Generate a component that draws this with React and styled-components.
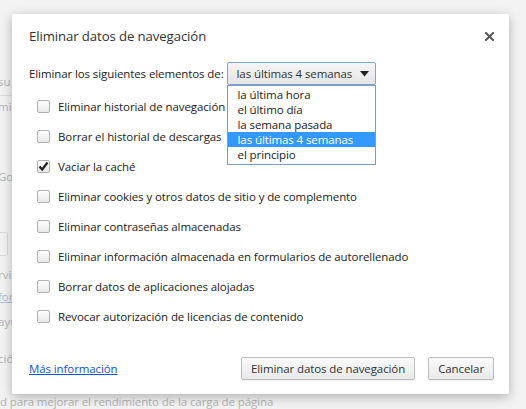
import React from "react"
import styled, { createGlobalStyle } from "styled-components"

const GlobalStyle = createGlobalStyle`
  html, body { margin: 0; padding: 0; }
  body {
    width: 526px;
    height: 409px;
    overflow: hidden;
    font-family: "Open Sans", "Liberation Sans", sans-serif;
  }
`

const ranges = [
  "la última hora",
  "el último día",
  "la semana pasada",
  "las últimas 4 semanas",
  "el principio",
]

const options = [
  { label: "Eliminar historial de navegación", checked: false },
  { label: "Borrar el historial de descargas", checked: false },
  { label: "Vaciar la caché", checked: true },
  { label: "Eliminar cookies y otros datos de sitio y de complemento", checked: false },
  { label: "Eliminar contraseñas almacenadas", checked: false },
  { label: "Eliminar información almacenada en formularios de autorellenado", checked: false },
  { label: "Borrar datos de aplicaciones alojadas", checked: false },
  { label: "Revocar autorización de licencias de contenido", checked: false },
]

const fragments = [
  { text: "su", top: 74 },
  { text: "mi", top: 99 },
  { text: "Go", top: 169 },
  { text: "rvi", top: 267 },
  { text: "for", top: 289, link: true },
  { text: "ayu", top: 314 },
  { text: "ció", top: 351 },
]

const App = () => {
  return (
    <Page>
      <GlobalStyle />
      {fragments.map((f) => (
        <Fragment key={f.text} style={{ top: f.top }} $link={f.link}>{f.text}</Fragment>
      ))}
      <FadedLine />
      <FadedBox />
      <BottomLine>d para mejorar el rendimiento de la carga de página</BottomLine>

      <Dialog>
        <TitleBar>
          <Title>Eliminar datos de navegación</Title>
          <Close>
            <svg width="9" height="9" viewBox="0 0 9 9">
              <path d="M1 1 L8 8 M8 1 L1 8" stroke="#555" strokeWidth="2" strokeLinecap="square" />
            </svg>
          </Close>
        </TitleBar>

        <RangeRow>
          <span>Eliminar los siguientes elementos de:</span>
          <SelectWrap>
            <Select>
              <span>las últimas 4 semanas</span>
              <svg width="9" height="6" viewBox="0 0 9 6">
                <path d="M0 0 H9 L4.5 5.5 Z" fill="#222" />
              </svg>
            </Select>
            <Menu>
              {ranges.map((r, i) => (
                <MenuItem key={r} $active={i === 3}>{r}</MenuItem>
              ))}
            </Menu>
          </SelectWrap>
        </RangeRow>

        <Checks>
          {options.map((o) => (
            <CheckRow key={o.label}>
              <Box>
                {o.checked && (
                  <svg width="11" height="11" viewBox="0 0 11 11">
                    <path d="M1.5 5.5 L4.2 8.5 L9.5 1.5" stroke="#222" strokeWidth="2.2" fill="none" />
                  </svg>
                )}
              </Box>
              <span>{o.label}</span>
            </CheckRow>
          ))}
        </Checks>

        <Footer>
          <MoreLink href="#">Más información</MoreLink>
          <Buttons>
            <Button>Eliminar datos de navegación</Button>
            <Button>Cancelar</Button>
          </Buttons>
        </Footer>
      </Dialog>
    </Page>
  )
}

const Page = styled.div`
position: relative;
width: 526px;
height: 409px;
background-color: #f3f3f3;
overflow: hidden;
`

const Fragment = styled.div`
position: absolute;
left: -2px;
font-size: 11.5px;
color: ${(p) => (p.$link ? "#a9bde0" : "#b4b4b4")};
text-decoration: ${(p) => (p.$link ? "underline" : "none")};
`

const FadedLine = styled.div`
position: absolute;
left: 0;
top: 95px;
width: 12px;
border-top: 1px solid #dedede;
`

const FadedBox = styled.div`
position: absolute;
left: -4px;
top: 232px;
width: 10px;
height: 22px;
border: 1px solid #dcdcdc;
border-radius: 2px;
`

const BottomLine = styled.div`
position: absolute;
left: 0;
top: 394px;
font-size: 11.5px;
letter-spacing: -0.1px;
color: #b4b4b4;
white-space: nowrap;
`

const Dialog = styled.div`
position: absolute;
left: 12px;
top: 14px;
width: 497px;
height: 380px;
box-sizing: border-box;
background: #fff;
border-radius: 2px;
box-shadow: 0 3px 12px rgba(0, 0, 0, 0.28);
padding: 0 15px 0 17px;
display: flex;
flex-direction: column;
color: #222;
font-size: 11.5px;
letter-spacing: -0.1px;
`

const TitleBar = styled.div`
display: flex;
justify-content: space-between;
align-items: center;
height: 44px;
`

const Title = styled.h1`
margin: 0;
font-size: 13.2px;
font-weight: 400;
color: #333;
`

const Close = styled.div`
display: flex;
`

const RangeRow = styled.div`
display: flex;
align-items: flex-start;
gap: 3px;
height: 33px;
padding-top: 4px;
line-height: 23px;
`

const SelectWrap = styled.div`
position: relative;
`

const Select = styled.div`
width: 149px;
height: 23px;
box-sizing: border-box;
border: 1px solid #7aa3e3;
border-radius: 2px;
background: linear-gradient(#f6f6f6, #e4e4e4);
display: flex;
align-items: center;
justify-content: space-between;
padding: 0 6px 0 9px;
color: #333;
`

const Menu = styled.div`
position: absolute;
top: 23px;
left: 0;
width: 149px;
box-sizing: border-box;
border: 1px solid #7f9db9;
background: #fff;
z-index: 2;
padding: 1px 0 2px;
`

const MenuItem = styled.div`
height: 15px;
line-height: 15px;
padding-left: 10px;
color: ${(p) => (p.$active ? "#fff" : "#222")};
background: ${(p) => (p.$active ? "#3399ff" : "transparent")};
`

const Checks = styled.div`
display: flex;
flex-direction: column;
margin-top: -4px;
`

const CheckRow = styled.div`
display: flex;
align-items: center;
gap: 8px;
height: 30px;
padding-left: 8px;
`

const Box = styled.div`
width: 13px;
height: 13px;
box-sizing: border-box;
border: 1px solid #b0b0b0;
border-radius: 2px;
background: linear-gradient(#fdfdfd, #e8e8e8);
display: flex;
align-items: center;
justify-content: center;
`

const Footer = styled.div`
margin-top: auto;
display: flex;
justify-content: space-between;
align-items: center;
padding-bottom: 14px;
`

const MoreLink = styled.a`
color: #1155cc;
text-decoration: underline;
`

const Buttons = styled.div`
display: flex;
gap: 13px;
`

const Button = styled.button`
height: 23px;
padding: 0 9px;
font-family: inherit;
font-size: 11.5px;
letter-spacing: -0.1px;
color: #333;
border: 1px solid #bcbcbc;
border-radius: 2px;
background: linear-gradient(#fafafa, #e9e9e9);
box-shadow: 0 1px 0 rgba(0, 0, 0, 0.06);
`

export default App
